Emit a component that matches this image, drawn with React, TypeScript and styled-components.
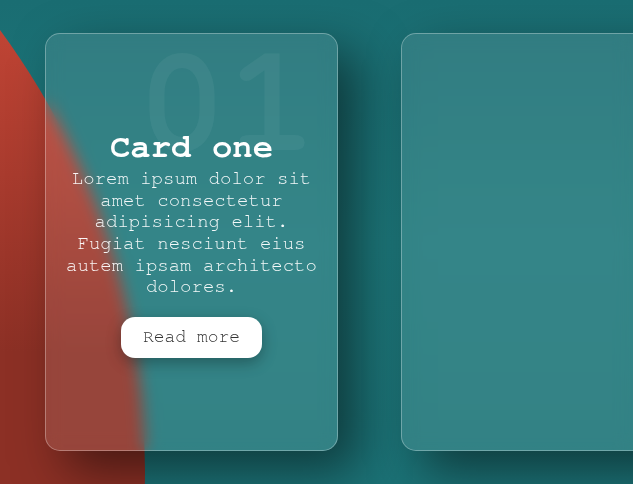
import styled, { createGlobalStyle } from "styled-components";

const GlobalStyle = createGlobalStyle`
  * {
    box-sizing: border-box;
  }
  body {
    margin: 0;
    background: #1c7377;
    font-family: "Nimbus Mono PS", "FreeMono", "Courier New", "Liberation Mono", monospace;
  }
`

const Scene = styled.div`
  position: relative;
  overflow: hidden;
  display: flex;
  align-items: center;
  gap: 63px;
  height: 484px;
  padding-left: 45px;
  background: linear-gradient(180deg, #1a6d72 0%, #1d787b 50%, #1c7377 100%);
`

// big red disc sitting behind the glass cards
const Blob = styled.div`
  position: absolute;
  left: -1335px;
  top: -270px;
  width: 1480px;
  height: 1480px;
  border-radius: 50%;
  background: linear-gradient(180deg, #c24535 19%, #a93b2e 30%, #8c3025 42%);
  z-index: 0;
`

const Card = styled.div`
  position: relative;
  z-index: 1;
  flex-shrink: 0;
  width: 293px;
  height: 418px;
  display: flex;
  flex-direction: column;
  align-items: center;
  justify-content: center;
  padding: 20px;
  text-align: center;
  color: #fff;
  background: rgba(255, 255, 255, 0.1);
  border: 1px solid rgba(255, 255, 255, 0.3);
  border-radius: 15px;
  box-shadow: 20px 20px 50px rgba(0, 0, 0, 0.5);
  backdrop-filter: blur(8px);
  overflow: hidden;
`

const Number = styled.span`
  position: absolute;
  top: 0;
  right: 20px;
  font-size: 150px;
  font-weight: bold;
  line-height: 0.95;
  color: rgba(255, 255, 255, 0.05);
  pointer-events: none;
`

const Title = styled.h3`
  position: relative;
  margin: 4px 0 0;
  font-size: 34px;
  font-weight: bold;
  line-height: 1;
`

const Text = styled.p`
  position: relative;
  margin: 4px 0 0;
  font-size: 19px;
  line-height: 21.6px;
  color: rgba(255, 255, 255, 0.95);
`

const ReadMore = styled.a`
  position: relative;
  display: inline-block;
  margin-top: 19px;
  padding: 10px 22px;
  font-size: 18px;
  line-height: 21px;
  color: #333;
  background: #fff;
  border-radius: 14px;
  text-decoration: none;
  box-shadow: 0 5px 15px rgba(0, 0, 0, 0.3);
`

export default function App() {
    return (
        <>
            <GlobalStyle />
            <Scene>
                <Blob />
                <Card>
                    <Number>01</Number>
                    <Title>Card one</Title>
                    <Text>
                        Lorem ipsum dolor sit amet consectetur adipisicing elit. Fugiat nesciunt eius autem ipsam architecto dolores.
                    </Text>
                    <ReadMore href="#">Read more</ReadMore>
                </Card>
                <Card />
            </Scene>
        </>
    )
}
